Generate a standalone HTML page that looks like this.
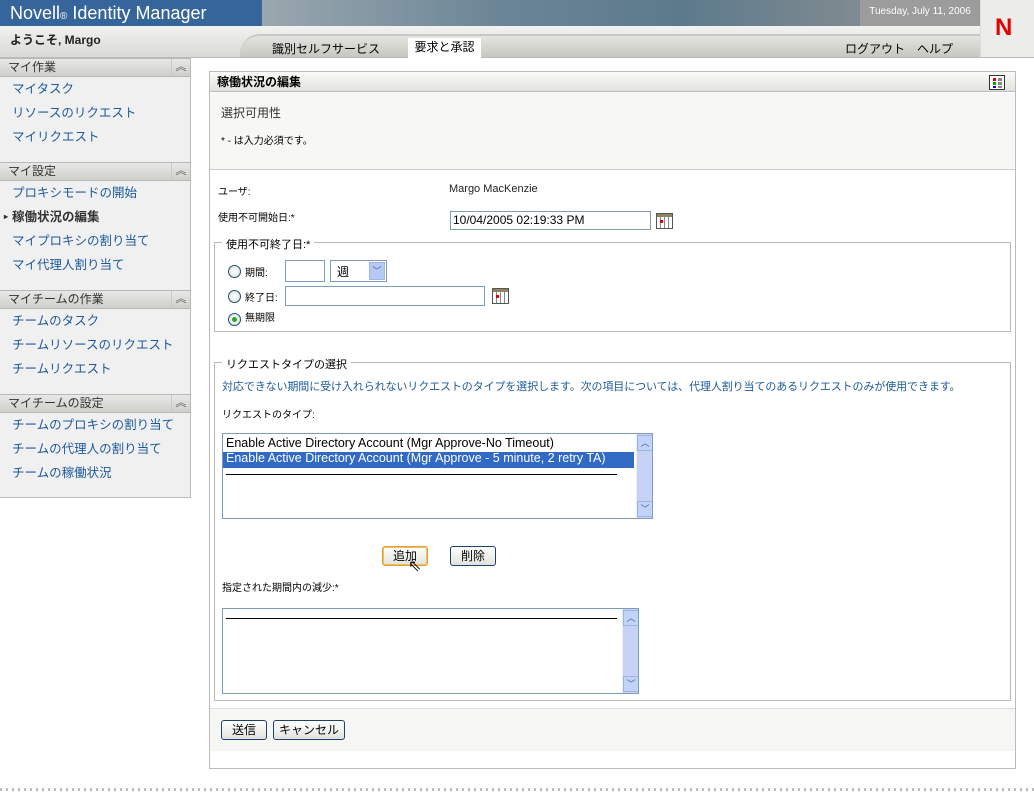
<!DOCTYPE html>
<html><head><meta charset="utf-8"><style>
*{box-sizing:border-box;margin:0;padding:0}
body{width:1034px;height:792px;position:relative;background:#fff;font-family:"Liberation Sans","Noto Sans CJK JP",sans-serif;font-size:12px;color:#000;overflow:hidden}
.a{position:absolute}
.sh{position:absolute;left:0;width:190px;height:19px;background:linear-gradient(#e8e8e6,#cfcfcc);border-top:1px solid #b8b8b8;border-bottom:1px solid #b8b8b8;font-size:12px;color:#333;padding:0 0 0 8px;line-height:17px}
.sh i{position:absolute;left:171px;top:0;width:19px;height:17px;border-left:1px solid #c8c8c8;font-style:normal;font-size:11px;text-align:center;color:#555;line-height:17px}
.sl{position:absolute;left:12px;font-size:12.5px;color:#1d5a9c;line-height:16px}
.btn{position:absolute;height:20px;border:1px solid #1e3f70;border-radius:3px;background:linear-gradient(#fff,#e2e2dc);font-size:12px;text-align:center;line-height:18px}
.inp{position:absolute;border:1px solid #7f9db9;background:#fff}
.radio{position:absolute;width:13px;height:13px;border:1px solid #1c5180;border-radius:50%;background:radial-gradient(#fff,#dcdcd6)}
.fs{position:absolute;border:1px solid #bbb}
.lg{position:absolute;background:#fff;padding:0 4px;font-size:11px}
.sb{position:absolute;width:16px;background:#c6d3f7;border-left:1px solid #eee}
.sbb{position:absolute;left:0;width:16px;height:16px;background:#c1d3fb;border:1px solid #9fb3e0;font-size:9px;text-align:center;line-height:14px;color:#4d6185}
.cal{position:absolute;width:17px;height:16px;border:1px solid #555;background:repeating-linear-gradient(90deg,#fff 0 3px,#888 3px 4px),#fff}
</style></head><body>
<div class="a" style="left:0;top:0;width:262px;height:26px;background:#36659b;color:#fff;font-size:18px;padding:3px 0 0 10px;line-height:20px">Novell<span style="font-size:10px">®</span> Identity Manager</div>
<div class="a" style="left:262px;top:0;width:598px;height:26px;background:linear-gradient(90deg,#9aa7ae,#6a8596 40%,#5c7a8c 70%,#808a90)"></div>
<div class="a" style="left:860px;top:0;width:120px;height:26px;background:#9c9c9c;color:#fff;font-size:10px;padding:6px 0 0 0;text-align:center">Tuesday, July 11, 2006</div>
<div class="a" style="left:980px;top:0;width:54px;height:58px;background:#ececea;border-left:1px solid #ddd"></div>
<div class="a" style="left:995px;top:14px;color:#e00000;font-size:24px;font-weight:bold">N</div>
<div class="a" style="left:0;top:26px;width:980px;height:32px;background:linear-gradient(#f2f2f0,#d8d8d4)"></div>
<div class="a" style="left:240px;top:34px;width:740px;height:24px;background:linear-gradient(#e4e4e0,#c6c6c0);border-radius:20px 0 0 0;border-top:2px solid #c8c8c4"></div>
<div class="a" style="left:0;top:57px;width:1034px;height:1px;background:#bbb"></div>
<div class="a" style="left:10px;top:31px;font-size:12px;font-weight:bold;color:#222">ようこそ, Margo</div>
<div class="a" style="left:272px;top:40px;font-size:12px">識別セルフサービス</div>
<div class="a" style="left:408px;top:38px;width:73px;height:20px;background:#fff;font-size:12px;text-align:center;padding-top:0">要求と承認</div>
<div class="a" style="left:845px;top:40px;font-size:12px">ログアウト</div>
<div class="a" style="left:917px;top:40px;font-size:12px">ヘルプ</div>
<div class="a" style="left:0;top:58px;width:191px;height:440px;background:#f0f0f0;border-right:1px solid #bbb;border-bottom:1px solid #bbb"></div>
<div class="sh" style="top:58px">マイ作業<i>︽</i></div>
<div class="sl" style="top:81px">マイタスク</div>
<div class="sl" style="top:105px">リソースのリクエスト</div>
<div class="sl" style="top:129px">マイリクエスト</div>
<div class="sh" style="top:162px">マイ設定<i>︽</i></div>
<div class="sl" style="top:185px">プロキシモードの開始</div>
<div class="sl" style="top:209px;color:#333;font-weight:bold"><span style="position:absolute;left:-8px;font-size:8px;top:0">▸</span>稼働状況の編集</div>
<div class="sl" style="top:233px">マイプロキシの割り当て</div>
<div class="sl" style="top:257px">マイ代理人割り当て</div>
<div class="sh" style="top:290px">マイチームの作業<i>︽</i></div>
<div class="sl" style="top:313px">チームのタスク</div>
<div class="sl" style="top:337px">チームリソースのリクエスト</div>
<div class="sl" style="top:361px">チームリクエスト</div>
<div class="sh" style="top:394px">マイチームの設定<i>︽</i></div>
<div class="sl" style="top:417px">チームのプロキシの割り当て</div>
<div class="sl" style="top:441px">チームの代理人の割り当て</div>
<div class="sl" style="top:465px">チームの稼働状況</div>
<div class="a" style="left:209px;top:71px;width:807px;height:698px;border:1px solid #bbb"></div>
<div class="a" style="left:210px;top:72px;width:805px;height:20px;background:linear-gradient(#fafaf8,#e2e2de);border-bottom:1px solid #bbb;font-weight:bold;font-size:12px;padding:1px 0 0 7px">稼働状況の編集</div>
<div class="a" style="left:989px;top:75px;width:16px;height:15px;border:1px solid #333;background:#fff"><div class="a" style="left:3px;top:2px;width:3px;height:3px;background:#e00"></div><div class="a" style="left:8px;top:2px;width:4px;height:3px;background:#888"></div><div class="a" style="left:3px;top:6px;width:3px;height:3px;background:#0a0"></div><div class="a" style="left:8px;top:6px;width:4px;height:3px;background:#888"></div><div class="a" style="left:3px;top:10px;width:3px;height:2px;background:#00e"></div><div class="a" style="left:8px;top:10px;width:4px;height:2px;background:#888"></div></div>
<div class="a" style="left:210px;top:93px;width:805px;height:77px;background:#f7f7f5;border-bottom:1px solid #ccc"></div>
<div class="a" style="left:221px;top:104px;font-size:12px;color:#333">選択可用性</div>
<div class="a" style="left:221px;top:132px;font-size:10px">* - は入力必須です。</div>
<div class="a" style="left:218px;top:183px;font-size:10px">ユーザ:</div>
<div class="a" style="left:449px;top:183px;font-size:11px;color:#222">Margo MacKenzie</div>
<div class="a" style="left:218px;top:209px;font-size:10px">使用不可開始日:*</div>
<div class="inp" style="left:450px;top:211px;width:201px;height:19px;font-size:12px;padding:1px 2px">10/04/2005 02:19:33 PM</div>
<div class="cal" style="left:656px;top:213px"><div class="a" style="left:0;top:0;width:15px;height:3px;background:#8c8460"></div><div class="a" style="left:3px;top:6px;width:3px;height:3px;background:#d00"></div></div>
<div class="fs" style="left:214px;top:242px;width:797px;height:90px"></div>
<div class="lg" style="left:222px;top:236px">使用不可終了日:*</div>
<div class="radio" style="left:228px;top:265px"></div>
<div class="a" style="left:245px;top:264px;font-size:10px">期間:</div>
<div class="inp" style="left:285px;top:260px;width:40px;height:22px"></div>
<div class="inp" style="left:330px;top:260px;width:57px;height:22px;font-size:12px;padding:2px 6px">週<div class="a" style="left:38px;top:1px;width:16px;height:18px;background:#b8c8f4;border:1px solid #a0b4e8;font-size:9px;text-align:center;line-height:16px;color:#4d6185">﹀</div></div>
<div class="radio" style="left:228px;top:290px"></div>
<div class="a" style="left:245px;top:289px;font-size:10px">終了日:</div>
<div class="inp" style="left:285px;top:286px;width:200px;height:20px"></div>
<div class="cal" style="left:492px;top:288px"><div class="a" style="left:0;top:0;width:15px;height:3px;background:#8c8460"></div><div class="a" style="left:3px;top:6px;width:3px;height:3px;background:#d00"></div></div>
<div class="radio" style="left:228px;top:313px"><div class="a" style="left:3px;top:3px;width:5px;height:5px;border-radius:50%;background:#2a2"></div></div>
<div class="a" style="left:245px;top:309px;font-size:10px">無期限</div>
<div class="fs" style="left:214px;top:362px;width:797px;height:339px"></div>
<div class="lg" style="left:222px;top:356px">リクエストタイプの選択</div>
<div class="a" style="left:222px;top:378px;font-size:11px;color:#1d5a9c;white-space:nowrap;letter-spacing:-0.1px">対応できない期間に受け入れられないリクエストのタイプを選択します。次の項目については、代理人割り当てのあるリクエストのみが使用できます。</div>
<div class="a" style="left:222px;top:406px;font-size:10px">リクエストのタイプ:</div>
<div class="inp" style="left:222px;top:433px;width:431px;height:86px;overflow:hidden">
<div class="a" style="left:3px;top:2px;font-size:12.5px;white-space:nowrap">Enable Active Directory Account (Mgr Approve-No Timeout)</div>
<div class="a" style="left:0;top:18px;width:411px;height:16px;background:#316ac5"></div>
<div class="a" style="left:3px;top:17px;font-size:12.5px;color:#fff;white-space:nowrap">Enable Active Directory Account (Mgr Approve - 5 minute, 2 retry TA)</div>
<div class="a" style="left:3px;top:40px;width:391px;height:1px;background:#000"></div>
<div class="sb" style="left:413px;top:0;height:84px"><div class="sbb" style="top:1px">︿</div><div class="sbb" style="top:67px">﹀</div></div>
</div>
<div class="btn" style="left:382px;top:546px;width:46px;border-color:#e0a030;box-shadow:0 0 0 1px #f0c060 inset">追加</div>
<div class="a" style="left:408px;top:556px;font-size:16px">⇖</div>
<div class="btn" style="left:450px;top:546px;width:46px">削除</div>
<div class="a" style="left:222px;top:579px;font-size:10px">指定された期間内の減少:*</div>
<div class="inp" style="left:222px;top:608px;width:417px;height:86px;overflow:hidden">
<div class="a" style="left:3px;top:9px;width:391px;height:1px;background:#000"></div>
<div class="sb" style="left:399px;top:0;height:84px"><div class="sbb" style="top:1px">︿</div><div class="sbb" style="top:67px">﹀</div></div>
</div>
<div class="a" style="left:210px;top:708px;width:805px;height:43px;background:#f6f6f4;border-top:1px solid #ddd"></div>
<div class="btn" style="left:221px;top:720px;width:46px">送信</div>
<div class="btn" style="left:273px;top:720px;width:72px">キャンセル</div>
<div class="a" style="left:0;top:788px;width:1034px;height:3px;background:repeating-linear-gradient(90deg,#bbb 0 2px,transparent 2px 6px)"></div>
</body></html>
